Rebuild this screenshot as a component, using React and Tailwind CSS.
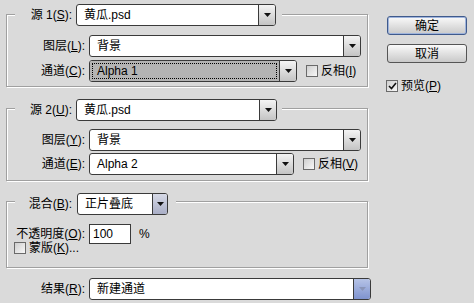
const BG = 'bg-[#dadada]';

function U({ children }) {
  return <span className="underline underline-offset-[1px]">{children}</span>;
}

function Arrow({ blue }) {
  return (
    <div
      className={
        'w-[17px] h-full flex items-center justify-center border-l border-[#3a3a3a] ' +
        (blue
          ? 'bg-gradient-to-b from-[#b6c3e6] to-[#7f93cf]'
          : 'bg-gradient-to-b from-[#f4f4f4] to-[#c4c4c4]')
      }
    >
      <svg width="7" height="4" viewBox="0 0 7 4">
        <path d="M0 0h7L3.5 4z" fill={blue ? '#8a95b8' : '#111'} />
      </svg>
    </div>
  );
}

function Select({ w, h = 22, value, focus, blue }) {
  return (
    <div
      className="flex items-stretch border border-[#3a3a3a] rounded-[3px] overflow-hidden bg-white shrink-0"
      style={{ width: w, height: h }}
    >
      <div className={'flex-1 flex items-center ' + (focus ? 'bg-[#b4b4b4] p-[2px]' : 'pl-[7px]')}>
        {focus ? (
          <div className="w-full h-full border border-dotted border-black flex items-center pl-[4px]">{value}</div>
        ) : (
          value
        )}
      </div>
      <Arrow blue={blue} />
    </div>
  );
}

function Check({ checked }) {
  return (
    <div className="w-[12px] h-[12px] border border-[#6a6a6a] bg-gradient-to-br from-[#cfcfcf] to-[#f8f8f8] flex items-center justify-center shrink-0">
      {checked && (
        <svg width="9" height="8" viewBox="0 0 9 8">
          <path d="M1 4l2.5 2.5L8 1" stroke="#111" strokeWidth="1.6" fill="none" />
        </svg>
      )}
    </div>
  );
}

function Label({ w, children }) {
  return (
    <div className="flex justify-end pr-[4px] shrink-0 whitespace-nowrap" style={{ width: w }}>
      {children}
    </div>
  );
}

function Group({ children, className }) {
  return (
    <div
      className={
        'ml-[6px] w-[362px] border border-[#a0a0a0] shadow-[inset_1px_1px_0_#fff,1px_1px_0_#fff] ' + className
      }
    >
      {children}
    </div>
  );
}

function Head({ label, w, value, selW, mt, gap, blue }) {
  return (
    <div className="flex items-center h-[22px]" style={{ marginTop: mt }}>
      <div className="w-[8px] shrink-0" />
      <div className={`flex justify-end pr-[4px] shrink-0 whitespace-nowrap ${BG}`} style={{ width: w }}>
        {label}
      </div>
      <Select w={selW} value={value} blue={blue} />
      <div className={`h-[22px] shrink-0 ${BG}`} style={{ width: gap }} />
    </div>
  );
}

export default function App() {
  return (
    <div
      className={`w-[474px] h-[303px] ${BG} flex text-[12px] leading-none text-black overflow-hidden`}
      style={{ fontFamily: '"Liberation Sans", "Noto Sans CJK SC", sans-serif' }}
    >
      <div className="w-[380px] shrink-0">
        <Group className="mt-[14px] pb-[4px]">
          <Head label={<span>源 1(<U>S</U>):</span>} w={61} value="黄瓜.psd" selW={200} mt={-11} gap={6} />
          <div className="flex items-center h-[22px] mt-[9px]">
            <Label w={82}>图层(<U>L</U>):</Label>
            <Select w={272} value="背景" />
          </div>
          <div className="flex items-center h-[22px] mt-[3px]">
            <Label w={82}>通道(<U>C</U>):</Label>
            <Select w={208} value="Alpha 1" focus />
            <div className="flex items-center gap-[3px] ml-[9px]">
              <Check />
              <span>反相(<U>I</U>)</span>
            </div>
          </div>
        </Group>

        <Group className="mt-[21px] pb-[5px]">
          <Head label={<span>源 2(<U>U</U>):</span>} w={61} value="黄瓜.psd" selW={201} mt={-10} gap={5} />
          <div className="flex items-center h-[22px] mt-[8px]">
            <Label w={82}>图层(<U>Y</U>):</Label>
            <Select w={272} value="背景" />
          </div>
          <div className="flex items-center h-[22px] mt-[2px]">
            <Label w={82}>通道(<U>E</U>):</Label>
            <Select w={205} value="Alpha 2" />
            <div className="flex items-center gap-[3px] ml-[9px]">
              <Check />
              <span>反相(<U>V</U>)</span>
            </div>
          </div>
        </Group>

        <Group className="mt-[20px] pb-[12px]">
          <div className="flex items-center h-[22px] -mt-[9px]">
            <div className="w-[8px] shrink-0" />
            <div className={`flex justify-end pr-[5px] shrink-0 whitespace-nowrap ${BG}`} style={{ width: 62 }}>
              混合(<U>B</U>):
            </div>
            <div className="flex items-stretch border border-[#3a3a3a] rounded-[3px] overflow-hidden bg-white w-[91px] h-[22px]">
              <div className="flex-1 flex items-center pl-[7px]">正片叠底</div>
              <div className="w-[15px] flex items-center justify-center border-l border-[#3a3a3a] bg-gradient-to-b from-[#d6d9e6] to-[#a9aec6]">
                <svg width="7" height="4" viewBox="0 0 7 4">
                  <path d="M0 0h7L3.5 4z" fill="#111" />
                </svg>
              </div>
            </div>
            <div className={`h-[22px] w-[8px] ${BG}`} />
          </div>
          <div className="flex items-center h-[20px] mt-[9px]">
            <Label w={82}>不透明度(<U>O</U>):</Label>
            <div className="w-[42px] h-[20px] border border-[#3a3a3a] bg-white flex items-center pl-[3px]">100</div>
            <span className="ml-[8px]">%</span>
          </div>
          <div className="flex items-center h-[14px] -mt-[3px] pl-[7px] gap-[3px]">
            <Check />
            <span>蒙版(<U>K</U>)...</span>
          </div>
        </Group>

        <div className="flex items-center h-[22px] mt-[10px] pl-[7px]">
          <Label w={82}>结果(<U>R</U>):</Label>
          <Select w={282} value="新建通道" blue />
        </div>
      </div>

      <div className="flex flex-col pl-[7px] pt-[16px]">
        <button className="w-[80px] h-[19px] border border-[#3f5a8c] rounded-[3px] bg-gradient-to-b from-[#fafafa] to-[#c9c9c9] shadow-[inset_0_0_0_1px_#9fb4dc] flex items-center justify-center">
          确定
        </button>
        <button className="w-[80px] h-[19px] mt-[9px] border border-[#555] rounded-[3px] bg-gradient-to-b from-[#fafafa] to-[#c9c9c9] flex items-center justify-center">
          取消
        </button>
        <div className="flex items-center gap-[3px] mt-[17px] -ml-[1px]">
          <Check checked />
          <span>预览(<U>P</U>)</span>
        </div>
      </div>
    </div>
  );
}
